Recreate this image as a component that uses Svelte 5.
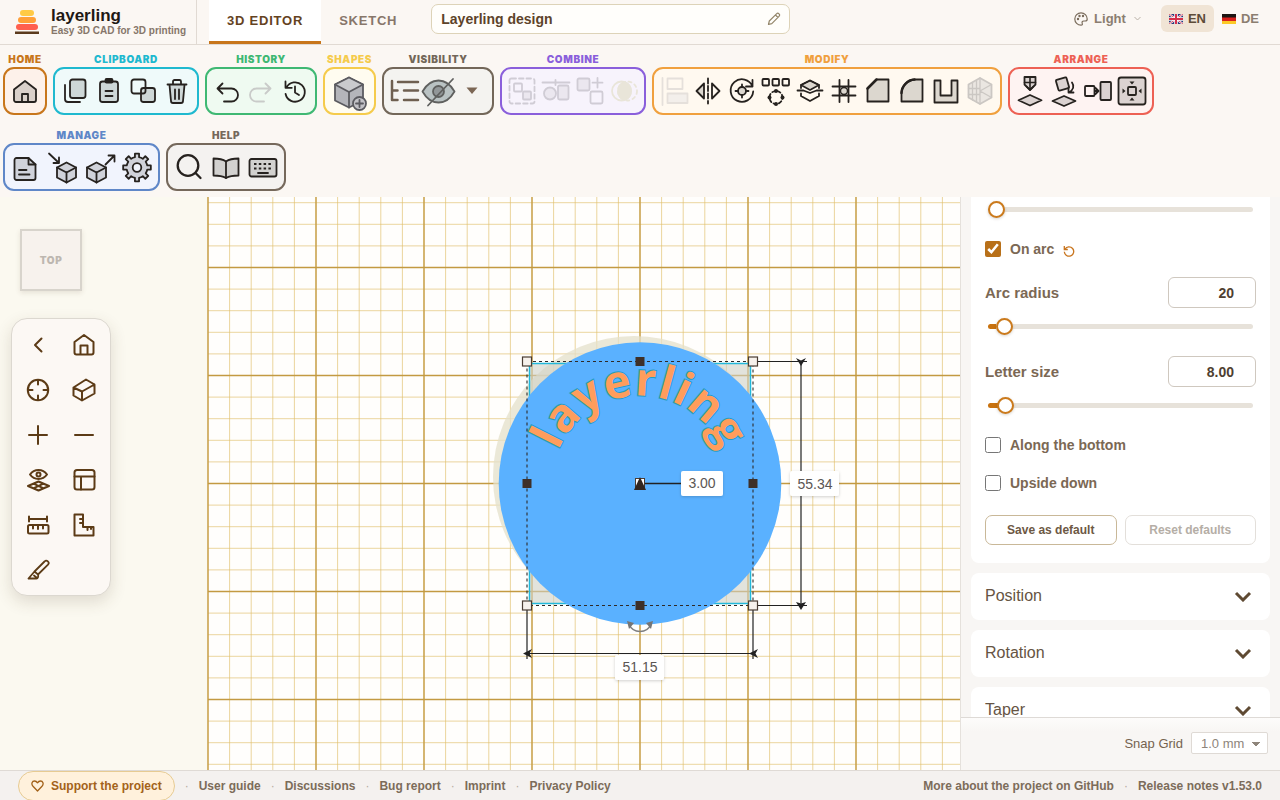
<script>
  const ink = '#26221f';
  const shade = 'rgba(40,36,40,0.16)';

  function gearPath(cx, cy, outer, inner, teeth) {
    const step = (Math.PI * 2) / teeth;
    const point = (r, a) => `${(cx + r * Math.cos(a)).toFixed(2)} ${(cy + r * Math.sin(a)).toFixed(2)}`;
    let d = '';
    for (let i = 0; i < teeth; i++) {
      const a = i * step - Math.PI / 2;
      d += `${i ? 'L' : 'M'}${point(inner, a - step * 0.25)}L${point(outer, a - step * 0.19)}L${point(outer, a + step * 0.19)}L${point(inner, a + step * 0.25)}`;
      d += `A${inner} ${inner} 0 0 1 ${point(inner, a + step * 0.75)}`;
    }
    return d + 'Z';
  }

  const groups = [
    { name: 'Home', color: '#c8761b', tint: '#fdf1ea', tools: [
      { label: 'Home', art: `<path fill="${shade}" d="M3 12.500 14 4l11 8.500V23a2 2 0 0 1-2 2H5a2 2 0 0 1-2-2Z"/><path d="M11 25v-8h6v8"/>` }
    ] },
    { name: 'Clipboard', color: '#1fb9cf', tint: '#effafa', tools: [
      { label: 'Copy', art: `<rect fill="${shade}" x="9" y="2.500" width="15.500" height="18.500" rx="2.500"/><path d="M4 8v14a3 3 0 0 0 3 3h12"/>` },
      { label: 'Paste', art: `<rect fill="${shade}" x="5" y="4.500" width="18" height="20.500" rx="2.500"/><rect fill="${ink}" x="10.500" y="2" width="7" height="3.500" rx="1"/><path d="M10.500 14h7M10.500 19h7"/>` },
      { label: 'Duplicate', art: `<rect x="2.500" y="2.500" width="14" height="14" rx="2.500"/><rect fill="${shade}" x="12" y="11" width="14" height="14" rx="2.500"/>` },
      { label: 'Delete', art: `<path fill="${shade}" d="M6.500 8 8 24a2 2 0 0 0 2 2h8a2 2 0 0 0 2-2l1.500-16"/><path d="M4.500 7.500h19M10 7V4.500A1.500 1.500 0 0 1 11.500 3h5A1.500 1.500 0 0 1 18 4.500V7M12 12.500v9.500M16 12.500v9.500"/>` }
    ] },
    { name: 'History', color: '#3fb873', tint: '#effaf1', tools: [
      { label: 'Undo', art: `<path d="M9.500 6.500 4.500 11.500l5 5M4.500 11.500H18.500a6.500 6.500 0 0 1 0 13H11"/>` },
      { label: 'Redo', off: true, art: `<path stroke="#c9cbc9" d="m18.500 6.500 5 5-5 5M23.500 11.500H9.500a6.500 6.500 0 0 0 0 13H17"/>` },
      { label: 'Version history', art: `<path d="M5.500 10.500A9.700 9.700 0 1 1 4.600 17M4.500 4.500v6.300h6.300M14 9.500V15.500l4 2.500"/>` }
    ] },
    { name: 'Shapes', color: '#f5cb4c', tint: '#fffcf0', kind: 'wide', tools: [
      { label: 'Add shape', size: 36, art: `<g stroke="#5b5b60"><path fill="#b4b5ba" d="m17 3.500 14 7v16l-14 7-14-7v-16Z"/><path fill="#c9cacd" d="m17 3.500 14 7-14 7.500-14-7.500Z"/><path d="M17 18v15.500"/><circle fill="#c3c3c7" cx="27.500" cy="29.500" r="6.500"/><path d="M24 29.500h7M27.500 26v7"/></g>` }
    ] },
    { name: 'Visibility', color: '#736759', tint: '#f4f3f0', tools: [
      { label: 'Object tree', art: `<path stroke="#6e5f50" stroke-width="2.500" d="M2 4v19h5.500M2 13.500h5.500M8 5h20M14 13.500h14M14 23h14"/>` },
      { label: 'Hide selection', size: 34, art: `<g stroke="#5f605f"><path fill="#b9c2c3" d="M1.500 17.500C6 9.500 11.500 6.500 17.500 6.500s11.500 3 16 11c-4.500 8-10 11-16 11s-11.500-3-16-11Z"/><circle fill="#929799" cx="17.500" cy="17.500" r="5.500"/><path d="m32 5-25 26.500"/></g>` },
      { label: 'More visibility options', art: `<path fill="#7b6654" stroke="none" d="M8.500 10.500h11l-5.500 6.500Z"/>` }
    ] },
    { name: 'Combine', color: '#8a5fdb', tint: '#f7f3fc', tools: [
      { label: 'Group', off: true, art: `<g stroke="#d0ccd5"><rect x="1.500" y="1.500" width="25" height="25" rx="2" stroke-dasharray="4.500 3"/><rect x="6" y="6.500" width="8" height="8" rx="1"/><rect fill="#ebe7ef" x="15" y="14.500" width="8" height="8" rx="1"/></g>` },
      { label: 'Subtract', off: true, art: `<g stroke="#d0ccd5"><path d="M.5 5.500h27M13.500 3v5"/><circle fill="#ebe7ef" cx="8" cy="16.500" r="6"/><rect fill="#ebe7ef" x="16" y="8.500" width="10.500" height="14" rx="1.500"/></g>` },
      { label: 'Ungroup', off: true, art: `<g stroke="#d0ccd5"><rect fill="#ebe7ef" x="1.500" y="1.500" width="12" height="12" rx="1.500"/><rect x="14.500" y="14.500" width="12" height="12" rx="1.500"/><path d="M21.500 1v9.500M16.500 5.700h10"/></g>` },
      { label: 'Intersect', off: true, art: `<g stroke="#e9e5d9"><circle cx="11.500" cy="14" r="9.500"/><circle cx="17.500" cy="14" r="9.500" stroke-dasharray="3 3.500"/><path fill="#e9e5d9" d="M14.500 5a9.500 9.500 0 0 1 0 18 9.500 9.500 0 0 1 0-18Z"/></g>` }
    ] },
    { name: 'Modify', color: '#f0a03e', tint: '#fff9f0', tools: [
      { label: 'Align', off: true, art: `<g stroke="#e5e0db"><path d="M2.500 1v27"/><rect x="7.500" y="1.500" width="15" height="10.500"/><rect fill="#f3efeb" x="7.500" y="16.500" width="20" height="9.500"/></g>` },
      { label: 'Mirror', art: `<path stroke-dasharray="5 2.500" d="M14 1.500v25"/><path fill="${shade}" d="M2.500 14 10 6.500v15Z"/><path d="M25.500 14 18 6.500v15Z"/>` },
      { label: 'Rotate', art: `<path d="M24.500 9.500A11.300 11.300 0 1 0 25.200 14.500M24.500 3v6.500H18"/><circle fill="${shade}" cx="14" cy="14" r="4"/><path d="M14 7.500V10M14 18v2.500M7.500 14H10M18 14h2.500"/>` },
      { label: 'Pattern', art: `<rect x="0.500" y="2" width="6.500" height="6.500" rx="1"/><rect x="10.500" y="2" width="6.500" height="6.500" rx="1"/><rect x="20.500" y="2" width="6.500" height="6.500" rx="1"/><circle cx="14" cy="20.500" r="6.500" stroke-dasharray="3 2.500" stroke-dashoffset="1.500"/><g fill="${ink}" stroke="none"><circle cx="14" cy="14" r="2"/><circle cx="14" cy="27" r="2"/><circle cx="7.500" cy="20.500" r="2"/><circle cx="20.500" cy="20.500" r="2"/></g>` },
      { label: 'Split', art: `<path fill="${shade}" stroke-width="1.600" d="m14 3.500 9 4.500-9 5-9-5Z"/><path d="M5 11V8l9-4.500L23 8v3M5 16.500v2.500l9 5 9-5v-2.500M1.500 13.500h6l6.500 2.500 6.500-2.500h6"/>` },
      { label: 'Grid cut', art: `<path d="M9.500 3v22M18.500 3v22M2.500 9.500h23M2.500 18.500h23"/><circle fill="${shade}" stroke-width="1.400" cx="14" cy="14" r="3.500"/>` },
      { label: 'Chamfer', art: `<path fill="${shade}" d="M3.500 11.500 12.500 2.500h12v22h-21Z"/><path stroke-width="2.500" d="M3.500 11.500l9-9"/>` },
      { label: 'Fillet', art: `<path fill="${shade}" d="M3.500 16.500a14 14 0 0 1 14-14h7v22h-21Z"/><path stroke-width="2.500" d="M3.500 16a14 14 0 0 1 13-13.400"/>` },
      { label: 'Shell', art: `<path fill="${shade}" d="M2.500 3.500H8.500v15h11v-15h6v22h-23Z"/>` },
      { label: 'Mesh', off: true, art: `<g stroke="#cbc7c3"><path fill="#eae6e1" d="m14 1 11.500 6.500v13L14 27 2.500 20.500v-13Z"/><path stroke-width="1.300" d="M14 1v26M14 14l11.500-6.500M14 14l11.500 6.500M2.500 11.500H14M2.500 17.500H14M6.500 5.500v17.500M10.500 3.500v21.500"/></g>` }
    ] },
    { name: 'Arrange', color: '#ed6154', tint: '#fef3f2', tools: [
      { label: 'Drop to plane', art: `<path fill="${shade}" d="M8.500 0h11v7.500L14 13 8.500 7.500Z"/><path stroke-width="1.600" d="M14 0v12M8.500 5.500h11M10.500 9.500 14 13l3.500-3.500"/><path fill="${shade}" d="m14 18 11.500 5.300L14 28.500 2.500 23.300Z"/>` },
      { label: 'Lay flat', art: `<rect fill="${shade}" x="7" y="1.500" width="11" height="11" rx="1" transform="rotate(-16 12.500 7)"/><path d="M22 5.500c2.500 3.500 1.500 7.500-3 10M18.500 10.500v5h5"/><path fill="${shade}" d="m14 19 11.500 5L14 29 2.500 24Z"/>` },
      { label: 'Snap together', art: `<rect x="1" y="9" width="9.500" height="10" rx="1"/><path d="M11 14h3M11.500 11l3 3-3 3"/><rect fill="${shade}" x="16.500" y="5" width="10.500" height="18" rx="1"/>` },
      { label: 'Center', art: `<rect fill="${shade}" x="0.500" y="0.500" width="27" height="27" rx="2.500"/><rect x="10" y="10" width="8" height="8" rx="1"/><g fill="${ink}" stroke="none"><path d="M11.500 4.500h5L14 7.500ZM11.500 23.500h5L14 20.500ZM4.500 11.500v5L7.500 14ZM23.500 11.500v5L20.500 14Z"/></g>` }
    ] },
    { name: 'Manage', color: '#5f87c8', tint: '#f1f4fd', kind: 'roomy', tools: [
      { label: 'Documents', art: `<path fill="${shade}" d="M4.500 5h12l7 6.500V25a2 2 0 0 1-2 2h-17a2 2 0 0 1-2-2V7a2 2 0 0 1 2-2Z"/><path d="M16.500 5v6.500h7M7 17h7.500M7 21.500h10.500"/>` },
      { label: 'Import', art: `<path fill="${shade}" d="m17.500 9.500 9.500 5v10l-9.500 5-9.500-5v-10Z"/><path d="m8 14.500 9.500 5 9.500-5M17.500 19.500v10"/><path d="m0 .5 10 9.500M10 4.500V10H4.500"/>` },
      { label: 'Export', art: `<path fill="${shade}" d="m10.500 9.500 9.500 5v10l-9.500 5-9.500-5v-10Z"/><path d="m1 14.500 9.500 5 9.500-5M10.500 19.500v10"/><path d="m19.500 11.500 9-9M22.500 2.500h6v6"/>` },
      { label: 'Settings', art: `<path fill="${shade}" d="${gearPath(14, 14.5, 14, 10.5, 8)}"/><circle fill="#f1f4fd" cx="14" cy="14.500" r="4.300"/>` }
    ] },
    { name: 'Help', color: '#75685b', tint: '#f4f2f0', kind: 'roomy', tools: [
      { label: 'Search', art: `<circle cx="13" cy="12.500" r="10.300" stroke-width="2.300"/><path stroke-width="2.300" d="m20.500 20 5 5"/>` },
      { label: 'Manual', art: `<path fill="${shade}" d="M14 8.500C10.500 6 6 5.500 1.500 5.500v17c4.500 0 9 .5 12.500 2.500 3.500-2 8-2.500 12.500-2.500v-17C22 5.500 17.500 6 14 8.500Z"/><path d="M14 8.500V25"/>` },
      { label: 'Keyboard shortcuts', art: `<rect fill="${shade}" x="0.500" y="6" width="27" height="17.500" rx="2"/><path stroke-linecap="butt" stroke-dasharray="2.500 2.300" d="M5 11h19M5 15.500h19"/><path d="M9 20h10"/>` }
    ] }
  ];

  const viewTools = [
    { label: 'Collapse', art: '<path d="M15.500 5.500 9 12l6.500 6.500"/>' },
    { label: 'Home view', art: '<path d="M2.500 9 12 2l9.500 7v10.500a2 2 0 0 1-2 2h-15a2 2 0 0 1-2-2ZM8.500 21.500V12.500h7v9"/>' },
    { label: 'Fit selection', art: '<circle cx="12" cy="12" r="10.200"/><path d="M12 2v4.500M12 17.500V22M2 12h4.500M17.500 12H22"/>' },
    { label: 'Projection', art: '<path d="m14 1.500 8.500 5v9L10 22.500l-8.500-5v-8ZM1.500 9.500l8.500 4 12.500-7M10 13.500v9"/>' },
    { label: 'Zoom in', art: '<path d="M12 3v18M3 12h18"/>' },
    { label: 'Zoom out', art: '<path d="M3 12h18"/>' },
    { label: 'Workplane visibility', art: '<path d="M4 6.500C6.500 3 9.500 2 12.500 2S18.500 3 21 6.500C18.500 10 15.500 11 12.500 11S6.500 10 4 6.500Z"/><circle cx="12.500" cy="6.500" r="2"/><path d="m12.500 13.500 10.500 4.500-10.500 4.500L2 18ZM7.500 15.700l10.200 4.600M17.500 15.700 7.300 20.300"/>' },
    { label: 'Panels', art: '<rect x="2.500" y="2" width="20" height="19.500" rx="2.500"/><path d="M2.500 8.500h20M9 8.500v13"/>' },
    { label: 'Measure', art: '<path d="M3 6h18M3 3.500v5M21 3.500v5"/><rect x="2" y="12" width="20.500" height="8.500" rx="1.500"/><path d="M7 12.500v3M12 12.500v3.500M17 12.500v3"/>' },
    { label: 'Ruler', art: '<path d="M2.500 1.500h8.500V14h10.500v8.500h-19ZM11 6H8M11 10H8M15.500 14v3M19 14v2"/>' },
    { label: 'Cut', art: '<path stroke-width="1.800" d="M18.500 3.500 8.500 13.500l3.500 3 10-9.800a2.300 2.300 0 0 0-3.500-3.200ZM8.500 13.500 2.500 20.500h8c1.500 0 2-2 1.500-4M8 17.500l2.500 2"/>' }
  ];

  const footerLinks = ['User guide', 'Discussions', 'Bug report', 'Imprint', 'Privacy Policy'];
  const sections = ['Position', 'Rotation', 'Taper'];

  const pitch = 21.6;
  const columns = Array.from({ length: 41 }, (_, i) => i - 20);
  const corners = [[527, 361], [753, 361], [527, 605], [753, 605]];
  const edges = [[640, 361], [527, 483], [753, 483], [640, 605]];

  let designName = $state('Layerling design');
  let depth = $state(0);
  let onArc = $state(true);
  let arcRadius = $state(3.2);
  let letterSize = $state(3.6);
  let alongBottom = $state(false);
  let upsideDown = $state(false);
</script>

<div class="app">
  <header>
    <div class="brand">
      <svg width="24" height="24" viewBox="0 0 24 24" aria-hidden="true">
        <rect x="5" y="0" width="14" height="6" rx="3" fill="#ffca45" />
        <rect x="3" y="7" width="18" height="6" rx="3" fill="#ffa038" />
        <rect x="1" y="14" width="22" height="6" rx="3" fill="#ff5f4e" />
        <rect x="0" y="21.500" width="24" height="2.500" fill="#5b3a1c" />
      </svg>
      <div>
        <h1>layerling</h1>
        <p>Easy 3D CAD for 3D printing</p>
      </div>
    </div>
    <nav class="tabs">
      <button class="tab active">3D EDITOR</button>
      <button class="tab">SKETCH</button>
    </nav>
    <label class="design">
      <input aria-label="Design name" bind:value={designName} />
      <svg width="14" height="14" viewBox="0 0 14 14" fill="none" stroke="#94866a" stroke-width="1.200" stroke-linejoin="round" aria-hidden="true"><path d="m1.500 12.500.8-3.500 7.200-7.200a1.700 1.700 0 0 1 2.500 2.500L4.800 11.600ZM8.500 3l2.500 2.500" /></svg>
    </label>
    <div class="prefs">
      <button class="theme">
        <svg width="14" height="14" viewBox="0 0 14 14" fill="none" stroke="#7b6d5d" stroke-width="1.200" aria-hidden="true"><path d="M7 .8a6.200 6.200 0 1 0 0 12.400c1.600 0 1.600-1 1.200-1.900-.5-1.200.2-2.300 1.500-2.300h1.600c1.200 0 1.900-.9 1.900-2C13.200 3.500 10.500.8 7 .8Z" /><circle cx="4" cy="7" r=".6" /><circle cx="5.500" cy="4" r=".6" /><circle cx="9" cy="4" r=".6" /></svg>
        Light
        <svg width="7" height="5" viewBox="0 0 7 5" fill="none" stroke="#b9b1a7" aria-hidden="true"><path d="m.5 1 3 3 3-3" /></svg>
      </button>
      <button class="lang chosen">
        <svg width="14" height="10" viewBox="0 0 14 10" aria-hidden="true"><path fill="#2b3a78" d="M0 0h14v10H0z" /><path stroke="#fff" stroke-width="2" d="m0 0 14 10M14 0 0 10" /><path stroke="#d4304a" stroke-width=".8" d="m0 0 14 10M14 0 0 10" /><path stroke="#fff" stroke-width="3.500" d="M7 0v10M0 5h14" /><path stroke="#d4304a" stroke-width="2" d="M7 0v10M0 5h14" /></svg>
        EN
      </button>
      <button class="lang">
        <svg width="14" height="10" viewBox="0 0 14 10" aria-hidden="true"><path fill="#1c1512" d="M0 0h14v4H0z" /><path fill="#d8201c" d="M0 3.500h14v3.500H0z" /><path fill="#fcc926" d="M0 7h14v3H0z" /></svg>
        DE
      </button>
    </div>
  </header>

  <div class="toolbar" role="toolbar" aria-label="Tools">
    {#each groups as group}
      <section class="group {group.kind ?? ''}" style="--accent: {group.color}; --tint: {group.tint}">
        <h2>{group.name}</h2>
        <div class="box">
          {#each group.tools as tool}
            <button aria-label={tool.label} disabled={tool.off}>
              <svg width={tool.size ?? 28} height={tool.size ?? 28} viewBox="0 0 {tool.size ?? 28} {tool.size ?? 28}" fill="none" stroke={ink} stroke-width="1.800" stroke-linecap="round" stroke-linejoin="round" aria-hidden="true">{@html tool.art}</svg>
            </button>
          {/each}
        </div>
      </section>
    {/each}
  </div>

  <main>
    <svg class="scene" viewBox="0 197 1280 573" preserveAspectRatio="xMidYMid slice" role="img" aria-label="Workplane">
      <defs>
        <path id="arc" d="M552 483.500a88 88 0 0 1 176 0" />
        <filter id="soft" x="-20%" y="-20%" width="140%" height="150%"><feDropShadow dx="0" dy="1" stdDeviation="1.500" flood-opacity=".18" /></filter>
      </defs>
      <rect x="208" y="51" width="864" height="864" fill="#fffefc" />
      <g stroke="#e0be6a" stroke-opacity=".65">
        {#each columns as n}
          <path d="M{640 + n * pitch} 51v865M208 {483.5 + n * pitch}h864" />
        {/each}
      </g>
      <g stroke="#c39a42" stroke-width="1.300">
        {#each columns.filter((n) => n % 5 === 0) as n}
          <path d="M{640 + n * pitch} 51v865M208 {483.5 + n * pitch}h864" />
        {/each}
      </g>
      <circle cx="634" cy="477" r="141" fill="#e4e0cb" fill-opacity=".75" />
      <rect x="529.500" y="363.500" width="221" height="240" fill="#cfd0c6" fill-opacity=".6" stroke="#21b8da" stroke-width="1.500" />
      <circle cx="640" cy="483.500" r="141.300" fill="#5ab1ff" />
      <text class="arc-text" text-anchor="middle"><textPath href="#arc" startOffset="50%">layerling</textPath></text>

      <rect x="527" y="361.500" width="226" height="244" fill="none" stroke="#2f2a28" stroke-width="1.100" stroke-dasharray="3 3" />
      <g fill="none" stroke="#222" stroke-width="1.200">
        <path d="M758 361.500h49M758 605.500h49M801 361v244M527 610v49M753 610v49M527 653.500h226" />
        <path d="M645 483.500h36" stroke-width="1.500" />
      </g>
      <g fill="#222">
        <path d="m801 366-5-8 5 2.500 5-2.500ZM801 610l-5-8 5 1.500 5-1.500ZM523 653.500l9-4.500-2.500 4.500 2.500 4.500ZM749 653.500l9-4.500-2.500 4.500 2.500 4.500Z" />
      </g>
      {#each corners as [x, y]}
        <rect x={x - 4.5} y={y - 4} width="9" height="9" fill="#f6f1ec" stroke="#4a3c33" stroke-width="1.200" />
      {/each}
      {#each edges as [x, y]}
        <rect x={x - 4.5} y={y - 4} width="9" height="9" fill="#3e3029" />
      {/each}
      <rect x="635.500" y="478.500" width="9" height="10" fill="#fff" stroke="#4a3c33" />
      <path d="M640 477l6 13h-12Z" fill="#332721" />
      <g fill="none" stroke="#7f7f7f" stroke-width="1.500"><path d="M629 624c4 10 18 10 22 0" /></g>
      <path fill="#757575" d="m627 621 7 2-5 6ZM653 621l-7 2 5 6Z" />
      <g class="dims">
        <rect x="681" y="471" width="42" height="25" rx="2" /><text x="702" y="488">3.00</text>
        <rect x="790" y="471" width="49" height="25" rx="2" /><text x="815" y="489">55.34</text>
        <rect x="615" y="655" width="49" height="25" rx="2" /><text x="640" y="672">51.15</text>
      </g>
    </svg>

    <aside class="view">
      <button class="cube">TOP</button>
      <div class="view-tools">
        {#each viewTools as tool}
          <button aria-label={tool.label}>
            <svg width="24" height="24" viewBox="0 0 24 24" fill="none" stroke="#5c3b16" stroke-width="2" stroke-linecap="round" stroke-linejoin="round" aria-hidden="true">{@html tool.art}</svg>
          </button>
        {/each}
      </div>
    </aside>

    <aside class="inspector">
      <div class="scroll">
        <section class="card props">
          <input type="range" aria-label="Depth" min="0" max="100" step="0.1" bind:value={depth} style="--fill: {depth}%" />
          <div class="check">
            <input id="on-arc" type="checkbox" bind:checked={onArc} />
            <label for="on-arc">On arc</label>
            <button class="reset" aria-label="Reset to default"><svg width="12" height="12" viewBox="0 0 12 12" fill="none" stroke="#c8741d" stroke-width="1.300" aria-hidden="true"><path d="M2 4a4.700 4.700 0 1 1-.7 2.800M1.300 1v3.500h3.500" /></svg></button>
          </div>
          <div class="field">
            <div class="row"><label for="arc-radius">Arc radius</label><input id="arc-radius" type="text" value="20" /></div>
            <input type="range" aria-label="Arc radius slider" min="0" max="100" step="0.1" bind:value={arcRadius} style="--fill: {arcRadius}%" />
          </div>
          <div class="field">
            <div class="row"><label for="letter-size">Letter size</label><input id="letter-size" type="text" value="8.00" /></div>
            <input type="range" aria-label="Letter size slider" min="0" max="100" step="0.1" bind:value={letterSize} style="--fill: {letterSize}%" />
          </div>
          <div class="check"><input id="along" type="checkbox" bind:checked={alongBottom} /><label for="along">Along the bottom</label></div>
          <div class="check"><input id="upside" type="checkbox" bind:checked={upsideDown} /><label for="upside">Upside down</label></div>
          <div class="actions"><button>Save as default</button><button disabled>Reset defaults</button></div>
        </section>
        {#each sections as title}
          <button class="card fold">
            {title}
            <svg width="18" height="12" viewBox="0 0 18 12" fill="none" stroke="#5f4a33" stroke-width="3" aria-hidden="true"><path d="m2 3 7 7 7-7" /></svg>
          </button>
        {/each}
      </div>
      <div class="snap">
        <label for="snap">Snap Grid</label>
        <select id="snap"><option>1.0 mm</option><option>5.0 mm</option></select>
      </div>
    </aside>
  </main>

  <footer>
    <a class="support" href="#support">
      <svg width="13" height="12" viewBox="0 0 13 12" fill="none" stroke="#a3621a" stroke-width="1.300" stroke-linejoin="round" aria-hidden="true"><path d="M6.500 11 2 6.300C-.2 3.800 1.200 1 3.500 1c1.300 0 2.300.7 3 1.800C7.200 1.700 8.200 1 9.500 1c2.300 0 3.700 2.800 1.500 5.300Z" /></svg>
      Support the project
    </a>
    {#each footerLinks as link}
      <span class="dot">·</span><a href="#{link}">{link}</a>
    {/each}
    <a class="end" href="#github">More about the project on GitHub</a>
    <span class="dot">·</span><a href="#notes">Release notes v1.53.0</a>
  </footer>
</div>

<style>
  :global(body) { margin: 0; }
  .app {
    height: 100vh;
    display: flex;
    flex-direction: column;
    overflow: hidden;
    background: #fbf7f3;
    color: #6d5a47;
    font-family: "Liberation Sans", Arial, sans-serif;
  }
  button, input, select { font: inherit; color: inherit; box-sizing: border-box; margin: 0; }
  button { background: none; border: 0; padding: 0; }
  svg { flex: none; }
  a { color: inherit; text-decoration: none; }

  header {
    display: flex;
    height: 44px;
    flex: none;
    border-bottom: 1px solid #e1dad3;
  }
  .brand {
    display: flex;
    align-items: center;
    gap: 12px;
    width: 181px;
    padding-left: 15px;
    border-right: 1px solid #e1dad3;
  }
  .brand h1 { margin: 0; font-size: 17px; line-height: 18px; color: #1f1914; }
  .brand p { margin: 0; font-size: 10px; line-height: 12px; font-weight: 700; color: #86766a; white-space: nowrap; }
  .tabs { display: flex; margin-left: 12px; }
  .tab {
    padding: 0 18px;
    border-bottom: 3px solid transparent;
    font-size: 13px;
    font-weight: 700;
    letter-spacing: 0.06em;
    color: #87766a;
  }
  .tab.active { background: #fff; border-color: #c8761b; color: #64431f; }
  .design {
    display: flex;
    align-items: center;
    flex: 0 1 340px;
    height: 28px;
    margin: 4px 0 0 16px;
    padding: 0 8px 0 9px;
    border: 1px solid #ddd3b8;
    border-radius: 7px;
    background: #fffefb;
  }
  .design input {
    flex: 1;
    min-width: 0;
    padding: 0;
    border: 0;
    outline: 0;
    background: none;
    font-size: 14px;
    font-weight: 700;
    color: #5d432a;
  }
  .prefs { display: flex; align-items: flex-start; margin-left: auto; padding: 5px 13px 0 0; font-size: 13px; font-weight: 700; }
  .prefs button { display: flex; align-items: center; height: 27px; }
  .theme { gap: 6px; margin-right: 20px; color: #8b7e70; }
  .theme svg:last-child { margin-left: 2px; }
  .lang { gap: 5px; padding: 0 8px; border-radius: 6px; color: #8b7e70; }
  .lang.chosen { background: #f0e4d5; color: #5d4c38; }

  .toolbar {
    display: flex;
    flex-wrap: wrap;
    gap: 14px 6px;
    flex: none;
    padding: 8px 3px 6px;
  }
  .group h2 {
    margin: 0;
    padding-bottom: 2px;
    font-family: Inter, "Liberation Sans", sans-serif;
    font-size: 10px;
    line-height: 12px;
    font-weight: 900;
    letter-spacing: 0.06em;
    text-align: center;
    text-transform: uppercase;
    color: var(--accent);
  }
  .box {
    display: flex;
    align-items: center;
    justify-content: center;
    height: 44px;
    padding: 0 3px;
    border: 2px solid var(--accent);
    border-radius: 11px;
    background: var(--tint);
  }
  .box button { display: grid; place-items: center; width: 34px; height: 34px; }
  .box svg { overflow: visible; }
  .wide .box button { width: 43px; }
  .roomy .box { gap: 1px; }
  .roomy .box button { width: 36px; }

  main {
    display: grid;
    grid-template: minmax(0, 1fr) / minmax(0, 1fr) 320px;
    flex: 1;
    min-height: 0;
    background: #fbf9f0;
  }
  .scene { grid-area: 1 / 1 / 2 / 3; width: 100%; height: 100%; min-height: 0; }
  .arc-text {
    font: 700 46px "Open Sans", sans-serif;
    letter-spacing: 0.02em;
    fill: #ff9d5c;
    stroke: #1e9ec4;
    stroke-width: 2px;
    paint-order: stroke;
  }
  .dims rect { fill: #fff; filter: url(#soft); }
  .dims text { font-size: 14px; fill: #5b5654; text-anchor: middle; }
  .view { grid-area: 1 / 1; justify-self: start; padding: 32px 0 0 11px; z-index: 1; }
  .cube {
    display: block;
    width: 62px;
    height: 62px;
    margin: 0 0 27px 9px;
    border: 2px solid #d8d4cc;
    background: #f7f2ed;
    box-shadow: 0 2px 5px rgba(80, 60, 30, 0.12);
    font-family: Inter, "Liberation Sans", sans-serif;
    font-size: 10px;
    font-weight: 900;
    letter-spacing: 0.06em;
    color: #bdb7b0;
  }
  .view-tools {
    display: grid;
    grid-template-columns: 46px 46px;
    grid-auto-rows: 45px;
    padding: 3px;
    border: 1px solid #dcd8d0;
    border-radius: 16px;
    background: #fcf8f4;
    box-shadow: 0 6px 16px rgba(80, 65, 40, 0.16);
  }
  .view-tools button { display: grid; place-items: center; }

  .inspector {
    grid-area: 1 / 2;
    display: flex;
    flex-direction: column;
    min-height: 0;
    border-left: 1px solid #e5e1dc;
    background: #f8f6f4;
    z-index: 1;
  }
  .scroll { flex: 1; min-height: 0; overflow: hidden; padding: 0 10px; }
  .card { display: block; box-sizing: border-box; width: 100%; margin-bottom: 10px; border-radius: 8px; background: #fff; }
  .props { padding: 4px 14px 18px; border-radius: 0 0 8px 8px; }
  .props label { font-size: 14px; line-height: 20px; font-weight: 700; color: #7b6854; }
  .props > input { margin-bottom: 21px; }
  .field { display: grid; gap: 10px; margin-bottom: 21px; }
  .field + .check { margin-top: 21px; }
  .row { display: flex; align-items: center; justify-content: space-between; }
  .props .row label { font-size: 15px; }
  .row input {
    width: 88px;
    height: 31px;
    padding: 0 21px 0 8px;
    border: 1px solid #cfc8bf;
    border-radius: 6px;
    background: #fff;
    text-align: right;
    font-size: 14px;
    font-weight: 700;
    color: #4f3f31;
  }
  input[type="range"] {
    appearance: none;
    display: block;
    width: calc(100% - 6px);
    height: 17px;
    margin-left: 3px;
    background: none;
  }
  input[type="range"]::-webkit-slider-runnable-track {
    height: 5px;
    border-radius: 3px;
    background: linear-gradient(to right, #c8720f var(--fill), #e7e2da var(--fill));
  }
  input[type="range"]::-webkit-slider-thumb {
    appearance: none;
    width: 17px;
    height: 17px;
    margin-top: -6px;
    border: 2px solid #cb7a1c;
    border-radius: 50%;
    background: #fff;
    box-sizing: border-box;
    box-shadow: 0 1px 3px rgba(60, 40, 10, 0.2);
  }
  .check { display: flex; align-items: center; height: 20px; margin-bottom: 18px; }
  .check input { width: 16px; height: 16px; margin-right: 9px; accent-color: #b87019; }
  .reset { display: flex; margin: 4px 0 0 9px; }
  .actions { display: grid; grid-template-columns: 1fr 1fr; gap: 8px; padding-top: 4px; }
  .actions button {
    height: 30px;
    border: 1px solid #c9b898;
    border-radius: 7px;
    font-size: 12px;
    font-weight: 700;
    color: #6d5844;
  }
  .actions button:disabled { border-color: #e3dfda; color: #b5aea6; }
  .fold {
    display: flex;
    align-items: center;
    justify-content: space-between;
    height: 47px;
    padding: 0 18px 2px 14px;
    font-size: 16px;
    color: #665443;
  }
  .snap {
    display: flex;
    align-items: center;
    justify-content: flex-end;
    gap: 8px;
    height: 50px;
    flex: none;
    padding: 0 12px 2px 0;
    border-top: 1px solid #dedad6;
    background: linear-gradient(#fdfcfb, #f8f6f4 14px);
    font-size: 13px;
    color: #75634f;
  }
  .snap select {
    appearance: none;
    width: 77px;
    height: 22px;
    padding: 0 20px 0 9px;
    border: 1px solid #dfdad5;
    border-radius: 2px;
    background:
      linear-gradient(45deg, transparent 50%, #8e857b 50%) 60px 9px / 4px 4px no-repeat,
      linear-gradient(-45deg, transparent 50%, #8e857b 50%) 64px 9px / 4px 4px no-repeat,
      #fff;
    color: #8e857b;
  }

  footer {
    display: flex;
    align-items: center;
    height: 29px;
    flex: none;
    padding: 0 18px;
    border-top: 1px solid #dfdad5;
    background: #f4f1ef;
    font-size: 12px;
    font-weight: 700;
    color: #7c6c5a;
    white-space: nowrap;
  }
  .support {
    display: flex;
    align-items: center;
    gap: 7px;
    height: 28px;
    padding: 0 12px;
    border: 1px solid #e7cb93;
    border-radius: 15px;
    background: #fff1dc;
    color: #a3621a;
  }
  .dot { width: 24px; text-align: center; color: #b5aa9d; font-weight: 400; }
  .end { margin-left: auto; }
</style>
